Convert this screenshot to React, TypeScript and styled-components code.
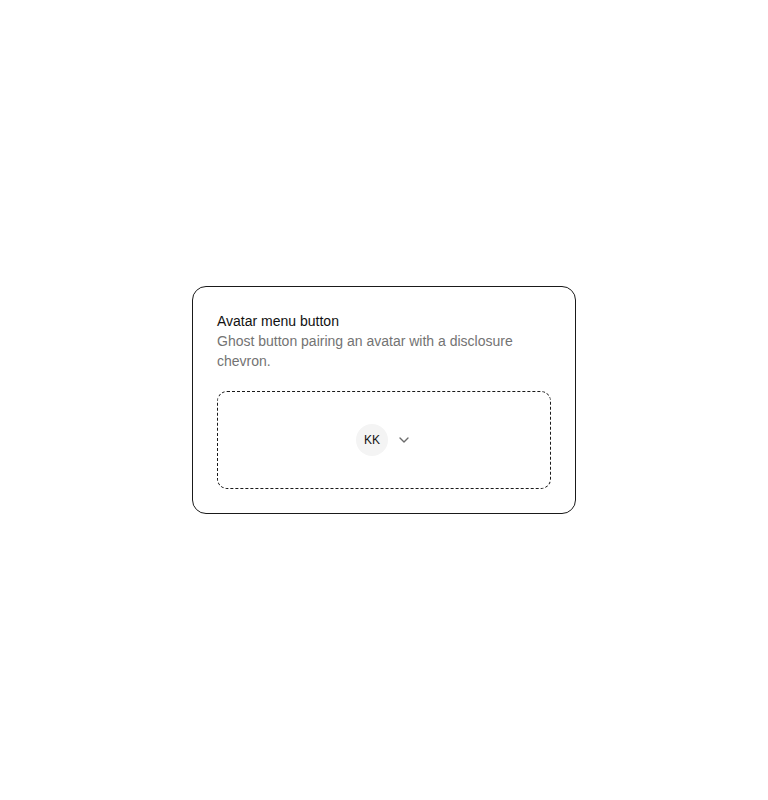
import React from "react";
import styled, { createGlobalStyle } from "styled-components";
import { ChevronDown } from "lucide-react";

const Global = createGlobalStyle`
  html, body { margin: 0; padding: 0; background: #ffffff; }
  body { font-family: "Liberation Sans", Arial, sans-serif; }
  * { box-sizing: border-box; }
`;

const Page = styled.div`
  width: 768px;
  height: 800px;
  display: flex;
  align-items: center;
  justify-content: center;
`;

const Card = styled.section`
  width: 384px;
  border: 1px solid #1a1a1a;
  border-radius: 14px;
  padding: 24px;
  display: flex;
  flex-direction: column;
  background: #fff;
`;

const Title = styled.h2`
  margin: 0;
  font-size: 14px;
  line-height: 20px;
  font-weight: 400;
  color: #111111;
`;

const Description = styled.p`
  margin: 0;
  font-size: 14px;
  line-height: 20px;
  color: #737373;
`;

const Stage = styled.div`
  margin-top: 20px;
  border: 1px dashed #1a1a1a;
  border-radius: 10px;
  padding: 32px;
  display: flex;
  align-items: center;
  justify-content: center;
`;

const GhostButton = styled.button`
  display: inline-flex;
  align-items: center;
  gap: 8px;
  padding: 0;
  border: none;
  background: transparent;
  cursor: pointer;
  font-family: inherit;
`;

const Avatar = styled.span`
  width: 32px;
  height: 32px;
  border-radius: 50%;
  background: #f4f4f4;
  color: #111111;
  font-size: 12px;
  display: inline-flex;
  align-items: center;
  justify-content: center;
`;

const Chevron = styled(ChevronDown)`
  color: #6b6b6b;
`;

export default function App() {
  return (
    <>
      <Global />
      <Page>
        <Card>
          <Title>Avatar menu button</Title>
          <Description>Ghost button pairing an avatar with a disclosure chevron.</Description>
          <Stage>
            <GhostButton type="button" aria-label="Open account menu">
              <Avatar>KK</Avatar>
              <Chevron size={16} strokeWidth={2} />
            </GhostButton>
          </Stage>
        </Card>
      </Page>
    </>
  );
}
